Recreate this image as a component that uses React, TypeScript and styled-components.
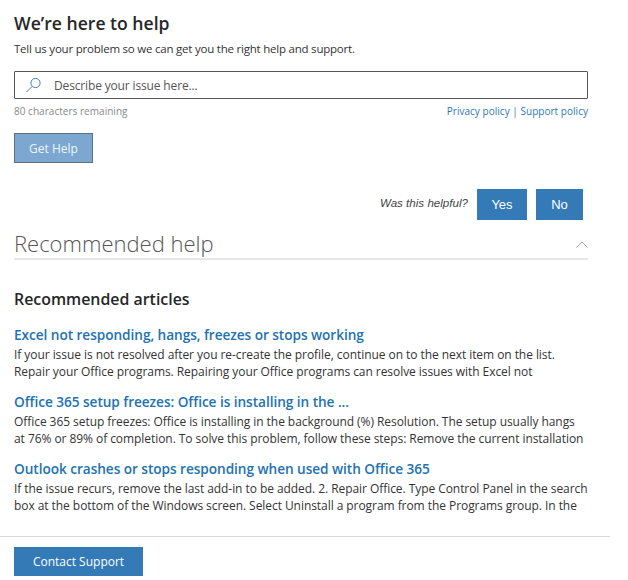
import React from "react";
import styled, { createGlobalStyle } from "styled-components";

const Global = createGlobalStyle`
  html, body { margin: 0; padding: 0; background: #fff; }
  body { font-family: "Open Sans", "Liberation Sans", sans-serif; color: #262626; }
  * { box-sizing: border-box; }
`;

const Page = styled.div`
  width: 628px;
  height: 580px;
  overflow: hidden;
  display: flex;
  flex-direction: column;
`;
const Main = styled.div`
  width: 588px;
  padding: 12px 0 0 14px;
  height: 536px;
`;
const Title = styled.h1`
  margin: 0;
  font-size: 17.6px;
  line-height: 22px;
  font-weight: 600;
  color: #262626;
`;
const Sub = styled.p`
  margin: 7px 0 0;
  font-size: 11.5px;
  line-height: 16px;
  letter-spacing: -0.22px;
  color: #333;
`;
const Search = styled.div`
  margin-top: 14px;
  height: 28px;
  border: 1px solid #555;
  border-radius: 1px;
  display: flex;
  align-items: center;
  padding-left: 10px;
  gap: 11px;
`;
const Placeholder = styled.span`
  font-size: 12px;
  letter-spacing: -0.15px;
  color: #555;
`;
const MetaRow = styled.div`
  display: flex;
  justify-content: space-between;
  align-items: center;
  margin-top: 4px;
  height: 15px;
  font-size: 10px;
  letter-spacing: 0.03px;
`;
const Remaining = styled.span`
  color: #888;
`;
const Policy = styled.span`
  color: #2f77b5;
`;
const GetHelp = styled.button`
  display: block;
  margin-top: 15px;
  width: 79px;
  height: 30px;
  padding: 0;
  border: 1px solid #5f6f80;
  background: #7ba7d0;
  color: #eef4fa;
  font: 12px "Open Sans", sans-serif;
`;
const Helpful = styled.div`
  display: flex;
  justify-content: flex-end;
  align-items: center;
  margin-top: 26px;
  padding-right: 5px;
  height: 31px;
`;
const HelpfulLabel = styled.span`
  font: italic 11.6px "Liberation Sans", sans-serif;
  color: #444;
  margin-right: 9px;
  margin-top: -5px;
`;
const Choice = styled.button<{ $w: number; $gap?: number }>`
  width: ${(p) => p.$w}px;
  margin-left: ${(p) => p.$gap ?? 0}px;
  height: 31px;
  padding: 0;
  border: none;
  background: #337ab7;
  color: #fff;
  font: 13px "Liberation Sans", sans-serif;
`;
const Section = styled.div`
  display: flex;
  justify-content: space-between;
  align-items: center;
  margin-top: 10px;
  height: 30px;
  border-bottom: 2px solid #e6e6e6;
`;
const SectionTitle = styled.h2`
  margin: -2px 0 0;
  font-size: 22px;
  line-height: 28px;
  font-weight: 300;
  color: #555;
`;
const Articles = styled.h3`
  margin: 29px 0 0;
  font-size: 15.9px;
  line-height: 20px;
  font-weight: 600;
  color: #262626;
`;
const ArticleList = styled.div`
  margin-top: 17px;
  display: flex;
  flex-direction: column;
  gap: 13px;
`;
const Article = styled.div`
  display: flex;
  flex-direction: column;
`;
const ArticleTitle = styled.a`
  font-size: 13.65px;
  line-height: 18px;
  font-weight: 600;
  letter-spacing: -0.05px;
  color: #2272b0;
`;
const ArticleBody = styled.p`
  margin: 2px 0 0;
  width: 574px;
  font-size: 12px;
  line-height: 17px;
  letter-spacing: -0.06px;
  color: #333;
  white-space: nowrap;
`;
const Footer = styled.div`
  width: 610px;
  height: 44px;
  border-top: 1px solid #d9d9d9;
  padding: 10px 0 0 14px;
`;
const Contact = styled.button`
  width: 129px;
  height: 29px;
  padding: 0;
  border: none;
  background: #337ab7;
  color: #fff;
  font: 12px "Open Sans", sans-serif;
`;

const articles = [
  {
    t: "Excel not responding, hangs, freezes or stops working",
    a: "If your issue is not resolved after you re-create the profile, continue on to the next item on the list.",
    b: "Repair your Office programs. Repairing your Office programs can resolve issues with Excel not",
  },
  {
    t: "Office 365 setup freezes: Office is installing in the ...",
    a: "Office 365 setup freezes: Office is installing in the background (%) Resolution. The setup usually hangs",
    b: "at 76% or 89% of completion. To solve this problem, follow these steps: Remove the current installation",
  },
  {
    t: "Outlook crashes or stops responding when used with Office 365",
    a: "If the issue recurs, remove the last add-in to be added. 2. Repair Office. Type Control Panel in the search",
    b: "box at the bottom of the Windows screen. Select Uninstall a program from the Programs group. In the",
  },
];

export default function App() {
  return (
    <Page>
      <Global />
      <Main>
        <Title>We’re here to help</Title>
        <Sub>Tell us your problem so we can get you the right help and support.</Sub>
        <Search>
          <svg width="18" height="16" viewBox="0 0 18 16" fill="none" stroke="#3f7fb8" strokeWidth="1">
            <circle cx="10.5" cy="6" r="4.6" />
            <path d="M7.2 9.3 1.5 15" />
          </svg>
          <Placeholder>Describe your issue here...</Placeholder>
        </Search>
        <MetaRow>
          <Remaining>80 characters remaining</Remaining>
          <Policy>Privacy policy | Support policy</Policy>
        </MetaRow>
        <GetHelp>Get Help</GetHelp>
        <Helpful>
          <HelpfulLabel>Was this helpful?</HelpfulLabel>
          <Choice $w={50}>Yes</Choice>
          <Choice $w={47} $gap={9}>No</Choice>
        </Helpful>
        <Section>
          <SectionTitle>Recommended help</SectionTitle>
          <svg width="12" height="7" viewBox="0 0 12 7" fill="none" stroke="#8fa6c4" strokeWidth="1">
            <path d="M.5 6.5 6 1l5.500 5.500" />
          </svg>
        </Section>
        <Articles>Recommended articles</Articles>
        <ArticleList>
          {articles.map((x) => (
            <Article key={x.t}>
              <ArticleTitle>{x.t}</ArticleTitle>
              <ArticleBody>
                {x.a}
                <br />
                {x.b}
              </ArticleBody>
            </Article>
          ))}
        </ArticleList>
      </Main>
      <Footer>
        <Contact>Contact Support</Contact>
      </Footer>
    </Page>
  );
}
